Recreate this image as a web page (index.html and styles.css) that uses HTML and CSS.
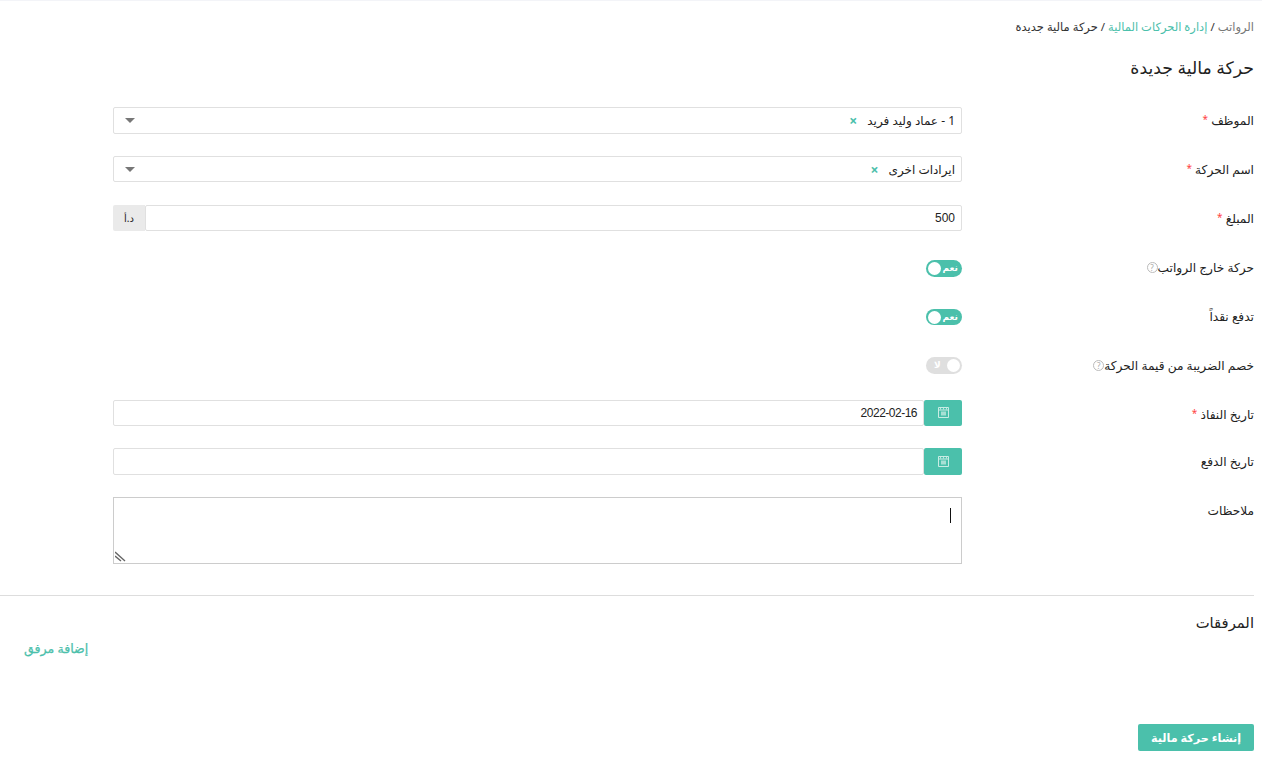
FILE: index.html
```html
<!DOCTYPE html>
<html lang="ar" dir="rtl">
<head>
<meta charset="utf-8">
<title>حركة مالية جديدة</title>
<link rel="stylesheet" href="styles.css">
</head>
<body>
<main class="page">
  <nav class="crumbs"><span class="crumb-root">الرواتب</span> / <a class="crumb-link">إدارة الحركات المالية</a> / <span>حركة مالية جديدة</span></nav>
  <h1 class="title">حركة مالية جديدة</h1>
  <form class="form">
    <div class="row">
      <label class="label">الموظف <i class="req">*</i></label>
      <div class="control select"><span class="value">1 - عماد وليد فريد</span><span class="clear">×</span><span class="caret"></span></div>
    </div>
    <div class="row">
      <label class="label">اسم الحركة <i class="req">*</i></label>
      <div class="control select"><span class="value">ايرادات اخرى</span><span class="clear">×</span><span class="caret"></span></div>
    </div>
    <div class="row">
      <label class="label">المبلغ <i class="req">*</i></label>
      <div class="group"><div class="control field num">500</div><span class="addon">د.أ</span></div>
    </div>
    <div class="row">
      <label class="label label-low">حركة خارج الرواتب<span class="help">?</span></label>
      <div class="toggle on"><span class="knob"></span><span class="toggle-text">نعم</span></div>
    </div>
    <div class="row">
      <label class="label label-low">تدفع نقداً</label>
      <div class="toggle on"><span class="knob"></span><span class="toggle-text">نعم</span></div>
    </div>
    <div class="row">
      <label class="label label-low">خصم الضريبة من قيمة الحركة<span class="help">?</span></label>
      <div class="toggle off"><span class="knob"></span><span class="toggle-text">لا</span></div>
    </div>
    <div class="row">
      <label class="label label-low">تاريخ النفاذ <i class="req">*</i></label>
      <div class="group">
        <span class="cal"><svg viewBox="0 0 11 11" width="11" height="11"><path class="cal-line" d="M.5.5h10v10H.5zM.5 3h10"/><path class="cal-tick" d="M2 1.8h1M5 1.8h1M8 1.8h1"/><rect class="cal-fill" x="3" y="4.5" width="5" height="4"/></svg></span>
        <div class="control field date" dir="ltr">2022-02-16</div>
      </div>
    </div>
    <div class="row">
      <label class="label">تاريخ الدفع</label>
      <div class="group">
        <span class="cal"><svg viewBox="0 0 11 11" width="11" height="11"><path class="cal-line" d="M.5.5h10v10H.5zM.5 3h10"/><path class="cal-tick" d="M2 1.8h1M5 1.8h1M8 1.8h1"/><rect class="cal-fill" x="3" y="4.5" width="5" height="4"/></svg></span>
        <div class="control field"></div>
      </div>
    </div>
    <div class="row row-notes">
      <label class="label">ملاحظات</label>
      <div class="notes"><span class="cursor"></span>
        <svg class="grip" viewBox="0 0 11 11" width="11" height="11"><path d="M0 1l10 9M0 5l6 5"/></svg>
      </div>
    </div>
  </form>
  <hr class="divider">
  <h2 class="section">المرفقات</h2>
  <div class="attach"><a class="add-link">إضافة مرفق</a></div>
  <div class="actions"><button class="submit" type="button">إنشاء حركة مالية</button></div>
</main>
</body>
</html>
```
FILE: styles.css
```css
* { box-sizing: border-box; }
html, body { margin: 0; padding: 0; background: #fff; }
body {
  font-family: "Noto Sans", "DejaVu Sans", sans-serif;
  font-size: 12px;
  color: #222;
  height: 769px;
  overflow: hidden;
  border-top: 1px solid #f3f4f8;
}
.page {
  width: 1254px;
  height: 768px;
  margin-right: 8px;
  position: relative;
}
.crumbs {
  padding-top: 16px;
  height: 36px;
  line-height: 20px;
  font-size: 11.5px;
  color: #333;
}
.crumb-root { color: #777; }
.crumb-link { color: #4bc0ab; }
.title {
  margin: 19px 0 0;
  height: 25px;
  font-size: 17.3px;
  line-height: 24px;
  font-weight: 400;
  color: #222;
}
.form { margin-top: 26.15px; }
.row {
  display: grid;
  grid-template-columns: 292px 849px;
  height: 48.75px;
  align-items: start;
}
.row-notes { height: 98px; }
.label { line-height: 26px; padding-top: 1px; font-size: 12.2px; }
.label-low { padding-top: 2px; }
.req { color: #f44; font-style: normal; font-size: 10px; line-height: 0; vertical-align: 2px; }
.help {
  display: inline-block;
  width: 11px;
  height: 11px;
  border: 1px solid #bbb;
  border-radius: 50%;
  color: #aaa;
  font-size: 8px;
  line-height: 9px;
  text-align: center;
  vertical-align: 1px;
}
.control {
  height: 26.4px;
  border: 1px solid #e0e0e0;
  border-radius: 2px;
  line-height: 24px;
  padding: 0 6px;
  background: #fff;
}
.select { display: flex; align-items: center; padding-top: 1px; }
.value { white-space: nowrap; }
.clear { color: #4bc0ab; margin-right: 10px; font-size: 14px; font-weight: 700; line-height: 20px; }
.caret {
  margin-right: auto;
  margin-left: 5px;
  border: 5px solid transparent;
  border-top-color: #777;
  border-bottom-width: 0;
}
.group { display: flex; }
.group .field { flex: 1; }
.num { font-family: "Liberation Sans", sans-serif; }
.addon {
  width: 32px;
  height: 26.4px;
  background: #eaeaea;
  text-align: center;
  line-height: 26px;
  font-size: 10px;
  border-radius: 2px 0 0 2px;
}
.cal {
  width: 38px;
  height: 26.4px;
  background: #4bc0ab;
  border-radius: 2px;
  display: flex;
  align-items: center;
  justify-content: center;
}
.cal-line { fill: none; stroke: #c9ece4; stroke-width: 1; }
.cal-tick { fill: none; stroke: #e6f7f3; stroke-width: 1; }
.cal-fill { fill: #a8e0d4; }
.date {
  font-family: "Liberation Sans", sans-serif;
  text-align: right;
  letter-spacing: -.5px;
  padding-right: 6px;
}
.toggle {
  width: 36px;
  height: 16.7px;
  border-radius: 9px;
  margin-top: 6.5px;
  position: relative;
  color: #fff;
  font-size: 9px;
  font-weight: 700;
  line-height: 15px;
}
.toggle.on { background: #4bc0ab; }
.toggle.off { background: #dfdfdf; }
.toggle-text { position: absolute; top: 0; }
.on .toggle-text { right: 4px; }
.off .toggle-text { left: 8px; }
.knob {
  position: absolute;
  top: 2px;
  width: 13px;
  height: 13px;
  border-radius: 50%;
  background: #fff;
}
.on .knob { left: 2px; }
.off .knob { right: 2px; }
.notes {
  height: 66.6px;
  border: 1px solid #ccc;
  position: relative;
}
.cursor {
  position: absolute;
  top: 10px;
  right: 10px;
  width: 1px;
  height: 15px;
  background: #111;
}
.grip { position: absolute; left: 1px; bottom: 1px; }
.grip path { stroke: #666; stroke-width: 1.4; fill: none; }
.divider { margin: 0; border: 0; border-top: 1px solid #ddd; position: absolute; top: 594px; left: 0; right: 0; }
.section {
  position: absolute;
  top: 609px;
  right: 0;
  margin: 0;
  font-size: 14.8px;
  font-weight: 400;
  line-height: 24px;
}
.attach { position: absolute; top: 639px; left: 24px; }
.add-link { color: #4bc0ab; font-weight: 400; font-size: 12.6px; -webkit-text-stroke: .25px #4bc0ab; }
.actions { position: absolute; top: 723px; right: 0; }
.submit {
  width: 116px;
  height: 27px;
  border: 0;
  border-radius: 2px;
  background: #4bc0ab;
  color: #fff;
  font: 700 11.2px "Noto Sans", "DejaVu Sans", sans-serif;
}
```
